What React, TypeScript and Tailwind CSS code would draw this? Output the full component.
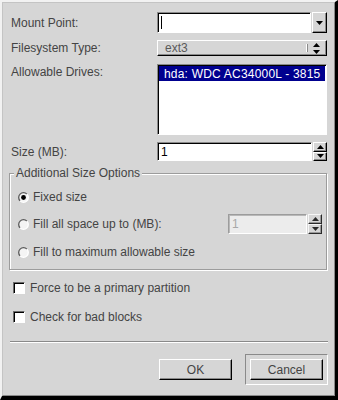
import React from 'react';

// GTK1-style "Add Partition" dialog

const txt = 'text-[12px] leading-[14px] text-[#444]';

function DownTri() {
  return (
    <svg width="7" height="4" viewBox="0 0 7 4" aria-hidden="true">
      <path d="M0 0h7L3.5 4z" fill="#000" />
    </svg>
  );
}

function UpTri() {
  return (
    <svg width="7" height="4" viewBox="0 0 7 4" aria-hidden="true">
      <path d="M0 4h7L3.5 0z" fill="#000" />
    </svg>
  );
}

function Radio({ checked }: { checked?: boolean }) {
  return (
    <svg width="11" height="11" viewBox="0 0 11 11" aria-hidden="true" className="shrink-0">
      <circle cx="5.5" cy="5.5" r="4.8" fill="#f4f4f4" />
      <path d="M2.1 8.9A4.8 4.8 0 0 1 8.9 2.1" stroke="#5a5a5a" strokeWidth="1.3" fill="none" />
      <path d="M8.9 2.1A4.8 4.8 0 0 1 2.1 8.9" stroke="#ffffff" strokeWidth="1.3" fill="none" />
      {checked && <circle cx="5.5" cy="5.5" r="2.4" fill="#000" />}
    </svg>
  );
}

function Checkbox() {
  return (
    <div className="h-[12px] w-[12px] shrink-0 border border-t-[#6a6a6a] border-l-[#6a6a6a] border-r-white border-b-white bg-white shadow-[inset_1px_1px_0_#000]" />
  );
}

const raised =
  'border border-t-white border-l-white border-r-black border-b-black shadow-[inset_-1px_-1px_0_#8a8a8a] bg-[#d6d6d6]';
const sunken =
  'border border-t-[#8a8a8a] border-l-[#8a8a8a] border-r-white border-b-white shadow-[inset_1px_1px_0_#000]';

function SpinArrows({ disabled }: { disabled?: boolean }) {
  return (
    <div className={`ml-px flex w-[14px] flex-col ${disabled ? 'opacity-80' : ''}`}>
      <div className={`flex flex-1 items-center justify-center ${raised}`}>
        <UpTri />
      </div>
      <div className={`flex flex-1 items-center justify-center ${raised}`}>
        <DownTri />
      </div>
    </div>
  );
}

export default function App() {
  return (
    <div className="h-[400px] w-[338px] border-t-2 border-l-2 border-r-[3px] border-b-[4px] border-t-[#f2f2f2] border-l-[#f2f2f2] border-r-black border-b-black font-['Liberation_Sans',Arial,sans-serif]">
      <div className="flex h-full flex-col border border-t-[#c4c4c4] border-l-[#c4c4c4] border-r-[#8a8a8a] border-b-[#8a8a8a] bg-[#d6d6d6]">
        {/* form rows */}
        <div className="pl-[8px] pt-[9px]">
          {/* Mount Point */}
          <div className="flex h-[21px] items-center">
            <div className={`w-[146px] ${txt}`}>Mount Point:</div>
            <div className="flex h-full w-[170px]">
              <div className={`flex flex-1 items-center bg-white pl-[3px] ${sunken}`}>
                <div className="h-[13px] w-px bg-black" />
              </div>
              <div className={`ml-px flex w-[15px] items-center justify-center ${raised}`}>
                <DownTri />
              </div>
            </div>
          </div>

          {/* Filesystem Type */}
          <div className="mt-[7px] flex h-[16px] items-center">
            <div className={`w-[146px] ${txt}`}>Filesystem Type:</div>
            <div className={`flex h-full w-[170px] items-center pl-[7px] pr-[6px] ${raised}`}>
              <span className="flex-1 text-[12px] leading-[14px] text-[#5a5a5a]">ext3</span>
              <div className="mr-[5px] h-[8px] w-[2px] border-l border-l-white border-r border-r-[#8a8a8a]" />
              <svg width="7" height="11" viewBox="0 0 7 11" aria-hidden="true">
                <path d="M0 4h7L3.5 0z M0 7h7L3.5 11z" fill="#000" />
              </svg>
            </div>
          </div>

          {/* Allowable Drives */}
          <div className="mt-[8px] flex h-[71px]">
            <div className={`w-[146px] pt-[1px] ${txt}`}>Allowable Drives:</div>
            <div className={`h-full w-[170px] overflow-hidden bg-white p-px ${sunken}`}>
              <div className="flex h-[15px] items-center overflow-hidden whitespace-nowrap bg-[#00008f] pl-[5px] text-[12px] leading-[14px] tracking-[0.2px] text-white">
                hda: WDC AC34000L - 3815
              </div>
            </div>
          </div>

          {/* Size */}
          <div className="mt-[7px] flex h-[19px] items-center">
            <div className={`w-[146px] ${txt}`}>Size (MB):</div>
            <div className="flex h-full w-[170px]">
              <div className={`flex flex-1 items-center bg-white pl-[3px] ${sunken}`}>
                <span className="text-[12px] leading-[14px] text-black">1</span>
              </div>
              <SpinArrows />
            </div>
          </div>
        </div>

        {/* Additional Size Options frame */}
        <div className="ml-[6px] mt-[12px] h-[97px] w-[318px]">
          <div className="relative h-full border border-[#9c9c9c] shadow-[inset_1px_1px_0_#fff,1px_1px_0_#fff]">
            <div className={`absolute -top-[8px] left-[4px] bg-[#d6d6d6] px-[2px] ${txt}`}>
              Additional Size Options
            </div>
            <div className="flex flex-col pl-[8px] pr-[4px] pt-[13px]">
              <div className="flex h-[20px] items-center gap-[4px]">
                <Radio checked />
                <span className={txt}>Fixed size</span>
              </div>
              <div className="mt-[7px] flex h-[20px] items-center gap-[4px]">
                <Radio />
                <span className={txt}>Fill all space up to (MB):</span>
                <div className="ml-auto flex h-[20px] w-[94px]">
                  <div className="flex flex-1 items-center border border-t-[#9c9c9c] border-l-[#9c9c9c] border-r-white border-b-white bg-[#ececec] pl-[3px] shadow-[inset_1px_1px_0_#b8b8b8]">
                    <span className="text-[12px] leading-[14px] text-[#a8a8a8]">1</span>
                  </div>
                  <SpinArrows disabled />
                </div>
              </div>
              <div className="mt-[8px] flex h-[20px] items-center gap-[4px]">
                <Radio />
                <span className={txt}>Fill to maximum allowable size</span>
              </div>
            </div>
          </div>
        </div>

        {/* check boxes */}
        <div className="ml-[10px] mt-[10px] flex h-[16px] items-center gap-[5px]">
          <Checkbox />
          <span className={txt}>Force to be a primary partition</span>
        </div>
        <div className="ml-[10px] mt-[13px] flex h-[16px] items-center gap-[5px]">
          <Checkbox />
          <span className={txt}>Check for bad blocks</span>
        </div>

        {/* separator */}
        <div className="ml-[7px] mt-[16px] h-[2px] w-[318px] border-t border-t-[#8a8a8a] border-b border-b-white" />

        {/* buttons */}
        <div className="mt-[11px] flex h-[31px] items-center pl-[156px]">
          <button type="button" className={`h-[21px] w-[73px] ${raised} ${txt}`}>
            OK
          </button>
          <div className="ml-[13px] flex h-[31px] w-[83px] items-center justify-center border border-t-[#8a8a8a] border-l-[#8a8a8a] border-r-white border-b-white">
            <button type="button" className={`h-[21px] w-[73px] ${raised} ${txt}`}>
              Cancel
            </button>
          </div>
        </div>
      </div>
    </div>
  );
}
